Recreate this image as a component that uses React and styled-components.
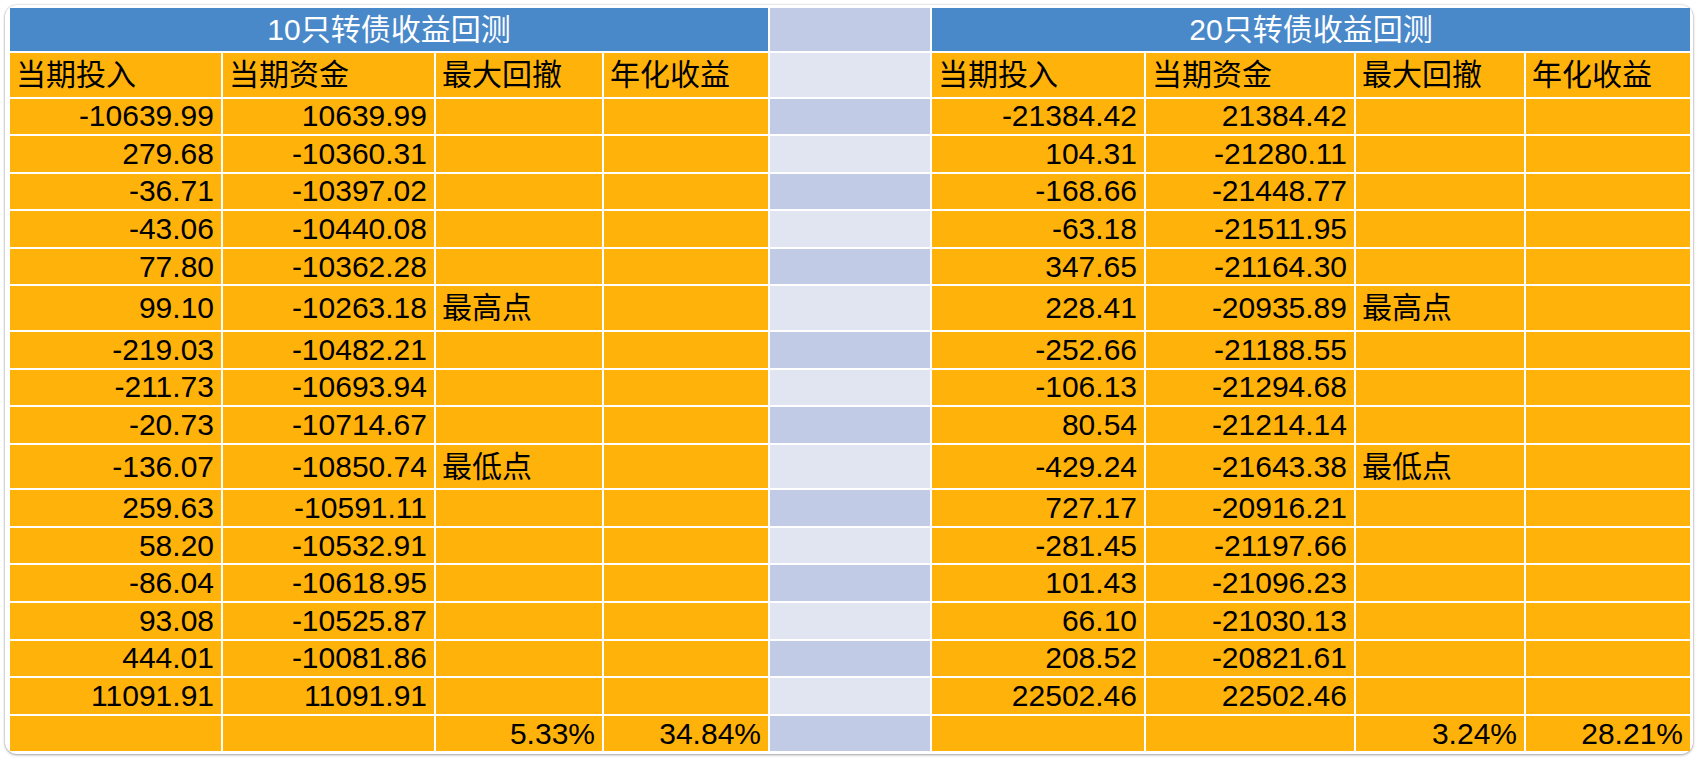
import React from "react";
import styled, { createGlobalStyle } from "styled-components";

const GlobalStyle = createGlobalStyle`
  html, body {
    margin: 0;
    padding: 0;
    background: #ffffff;
  }
`;

const Page = styled.div`
  padding: 5px;
  font-family: "Liberation Sans", "Noto Sans CJK SC", sans-serif;
`;

const Card = styled.div`
  width: 1680px;
  padding: 3px 3px 3px 5px;
  background: #ffffff;
  border-radius: 12px;
  box-shadow: 0 1px 3px rgba(0, 0, 0, 0.35), 0 0 0 1px rgba(0, 0, 0, 0.05);
`;

// title, header, 5 rows, tall, 3 rows, tall, 6 rows + summary
const Grid = styled.div`
  display: grid;
  grid-template-columns: 211px 211px 166px 164px 160px 212px 208px 168px 164px;
  grid-template-rows:
    43px 43.5px repeat(5, 35.6px) 43.5px repeat(3, 35.6px) 43.5px
    repeat(7, 35.6px);
  gap: 2px;
`;

const Title = styled.div`
  grid-column: span 4;
  background: #4a89c9;
  color: #ffffff;
  font-size: 30px;
  line-height: 1;
  display: flex;
  align-items: center;
  justify-content: center;
`;

const Cell = styled.div`
  background: #ffb20a;
  color: #000000;
  font-size: 30px;
  line-height: 1;
  display: flex;
  align-items: center;
  justify-content: ${(p) => (p.$right ? "flex-end" : "flex-start")};
  padding: 0 7px 0 6px;
  white-space: nowrap;
`;

const Divider = styled.div`
  background: ${(p) => (p.$dark ? "#c2cbe5" : "#e1e4f1")};
`;

const heads = ["当期投入", "当期资金", "最大回撤", "年化收益"];

const left = [
  ["-10639.99", "10639.99"],
  ["279.68", "-10360.31"],
  ["-36.71", "-10397.02"],
  ["-43.06", "-10440.08"],
  ["77.80", "-10362.28"],
  ["99.10", "-10263.18", "最高点"],
  ["-219.03", "-10482.21"],
  ["-211.73", "-10693.94"],
  ["-20.73", "-10714.67"],
  ["-136.07", "-10850.74", "最低点"],
  ["259.63", "-10591.11"],
  ["58.20", "-10532.91"],
  ["-86.04", "-10618.95"],
  ["93.08", "-10525.87"],
  ["444.01", "-10081.86"],
  ["11091.91", "11091.91"],
];

const right = [
  ["-21384.42", "21384.42"],
  ["104.31", "-21280.11"],
  ["-168.66", "-21448.77"],
  ["-63.18", "-21511.95"],
  ["347.65", "-21164.30"],
  ["228.41", "-20935.89", "最高点"],
  ["-252.66", "-21188.55"],
  ["-106.13", "-21294.68"],
  ["80.54", "-21214.14"],
  ["-429.24", "-21643.38", "最低点"],
  ["727.17", "-20916.21"],
  ["-281.45", "-21197.66"],
  ["101.43", "-21096.23"],
  ["66.10", "-21030.13"],
  ["208.52", "-20821.61"],
  ["22502.46", "22502.46"],
];

const Side = ({ row }) => (
  <>
    <Cell $right>{row[0]}</Cell>
    <Cell $right>{row[1]}</Cell>
    <Cell>{row[2] || ""}</Cell>
    <Cell />
  </>
);

const App = () => (
  <Page>
    <GlobalStyle />
    <Card>
      <Grid>
        <Title>10只转债收益回测</Title>
        <Divider $dark />
        <Title>20只转债收益回测</Title>

        {heads.map((h) => (
          <Cell key={"l" + h}>{h}</Cell>
        ))}
        <Divider />
        {heads.map((h) => (
          <Cell key={"r" + h}>{h}</Cell>
        ))}

        {left.map((row, i) => (
          <React.Fragment key={i}>
            <Side row={row} />
            <Divider $dark={i % 2 === 0} />
            <Side row={right[i]} />
          </React.Fragment>
        ))}

        <Cell />
        <Cell />
        <Cell $right>5.33%</Cell>
        <Cell $right>34.84%</Cell>
        <Divider $dark />
        <Cell />
        <Cell />
        <Cell $right>3.24%</Cell>
        <Cell $right>28.21%</Cell>
      </Grid>
    </Card>
  </Page>
);

export default App;
